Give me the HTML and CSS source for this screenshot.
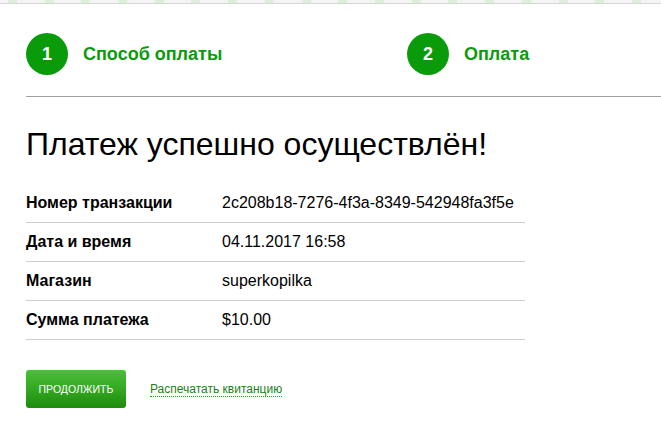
FILE: index.html
```html
<!DOCTYPE html>
<html lang="ru">
<head>
<meta charset="utf-8">
<title>Платеж успешно осуществлён!</title>
<link rel="stylesheet" href="styles.css">
</head>
<body>
<div class="topstrip"></div>
<div class="page">
  <div class="steps">
    <div class="step step-first">
      <span class="step-num">1</span>
      <span class="step-title">Способ оплаты</span>
    </div>
    <div class="step">
      <span class="step-num">2</span>
      <span class="step-title">Оплата</span>
    </div>
  </div>
  <h1 class="title">Платеж успешно осуществлён!</h1>
  <table class="details">
    <tr><th>Номер транзакции</th><td>2c208b18-7276-4f3a-8349-542948fa3f5e</td></tr>
    <tr><th>Дата и время</th><td>04.11.2017 16:58</td></tr>
    <tr><th>Магазин</th><td>superkopilka</td></tr>
    <tr><th>Сумма платежа</th><td>$10.00</td></tr>
  </table>
  <div class="actions">
    <button class="btn" type="button">Продолжить</button>
    <a class="print-link" href="#">Распечатать квитанцию</a>
  </div>
</div>
</body>
</html>
```
FILE: styles.css
```css
html, body {
  margin: 0;
  padding: 0;
  background: #fff;
}
body {
  font-family: "Liberation Sans", Arial, sans-serif;
  color: #000;
}
.topstrip {
  height: 3px;
  background-color: #f4f4f4;
  background-image: repeating-linear-gradient(90deg, transparent 0, transparent 8px, #dcefd8 8px, #dcefd8 17px, transparent 17px, transparent 36.7px);
  border-bottom: 1px solid #d6d6d6;
}
.page {
  padding-left: 26px;
}
.steps {
  display: flex;
  padding-top: 29px;
  padding-bottom: 21px;
  border-bottom: 1px solid #a0a0a0;
}
.step {
  display: flex;
  align-items: center;
  flex: 1 1 auto;
  min-width: 0;
}
.step-first {
  flex: 0 0 381px;
}
.step-num {
  flex: 0 0 42px;
  height: 42px;
  border-radius: 50%;
  background: #0a9b0a;
  color: #fff;
  font-weight: bold;
  font-size: 18px;
  display: flex;
  align-items: center;
  justify-content: center;
}
.step-title {
  margin-left: 15px;
  color: #0a9b0a;
  font-weight: bold;
  font-size: 18px;
}
.title {
  margin: 29px 0 0;
  font-size: 32px;
  line-height: 37px;
  font-weight: normal;
  color: #000;
}
.details {
  margin-top: 21px;
  width: 499px;
  border-collapse: collapse;
  font-size: 16px;
}
.details th,
.details td {
  height: 38px;
  padding: 0;
  border-bottom: 1px solid #cfcfcf;
  text-align: left;
  vertical-align: middle;
}
.details th {
  width: 196px;
  font-weight: bold;
}
.actions {
  display: flex;
  align-items: center;
  margin-top: 30px;
}
.btn {
  width: 100px;
  height: 38px;
  border: 0;
  border-radius: 3px;
  background: linear-gradient(#4cc03a, #1c8d0c);
  color: #fff;
  font-family: "Liberation Sans", Arial, sans-serif;
  font-size: 10.5px;
  text-transform: uppercase;
  padding: 0;
}
.print-link {
  margin-left: 24px;
  font-size: 12px;
  color: #1a7f1a;
  text-decoration: none;
  border-bottom: 1px dotted #22a822;
  line-height: 14px;
}
```
